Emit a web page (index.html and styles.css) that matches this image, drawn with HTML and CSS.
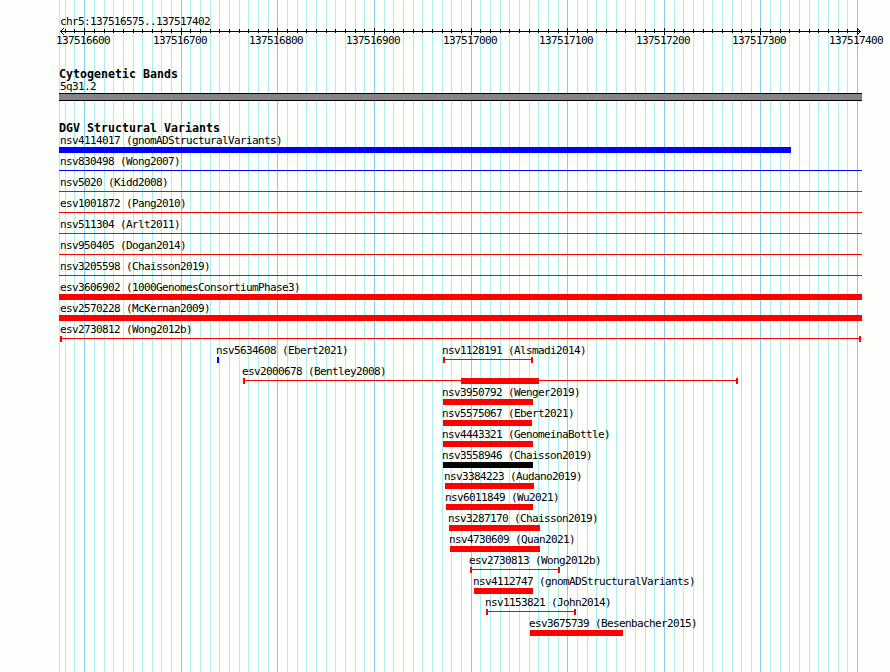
FILE: index.html
```
<!DOCTYPE html>
<html lang="en">

<head>
    <meta charset="UTF-8">
    <meta name="viewport" content="width=device-width, initial-scale=1.0">
    <title>chr5:137516575..137517402</title>
    <link rel="stylesheet" href="styles.css">
</head>

<body>
    <div class="browser">
        <svg class="grid" id="grid" width="890" height="672" shape-rendering="crispEdges"></svg>

        <div class="region">chr5:137516575..137517402</div>
        <svg class="ruler" id="ruler" width="890" height="7" shape-rendering="crispEdges"></svg>
        <div class="scale" id="scale"></div>

        <h2 class="track-title cyto-title">Cytogenetic Bands</h2>
        <div class="band-label">5q31.2</div>
        <div class="band"></div>

        <h2 class="track-title dgv-title">DGV Structural Variants</h2>
        <div id="variants"></div>
    </div>

    <script src="script.js"></script>
</body>

</html>
```
FILE: styles.css
```
body {
    margin: 0;
    background-color: #fdfffc;
    color: #000;
    font-family: "DejaVu Sans Mono", monospace;
    font-size: 11px;
    letter-spacing: -0.622px;
    line-height: 13px;
}

.browser {
    position: relative;
    width: 890px;
    height: 672px;
    overflow: hidden;
}

/* sits behind every track */
.grid {
    position: absolute;
    top: 0;
    left: 0;
    z-index: -1;
}

.minor {
    fill: #afeeee;
}

.major {
    fill: #87ceeb;
}

.region {
    padding: 15px 0 0 60px;
}

.ruler {
    display: block;
}

.scale {
    display: grid;
    height: 13px;
    margin-top: -1px;
}

.scale span {
    grid-area: 1 / 1;
    white-space: nowrap;
}

.track-title {
    margin: 0 0 0 59px;
    font-size: 11.6px;
    font-weight: bold;
    letter-spacing: 0.016px;
    line-height: 13px;
}

.cyto-title {
    margin-top: 21px;
}

.band-label {
    height: 12px;
    margin-left: 60px;
    line-height: 11px;
}

.band {
    box-sizing: border-box;
    width: 803px;
    height: 8px;
    margin-left: 59px;
    border: solid #000;
    border-width: 1px 0;
    background-color: #868286;
}

.dgv-title {
    margin-top: 21px;
    height: 12px;
}

.row {
    display: grid;
    height: 21px;
}

.feature {
    grid-area: 1 / 1;
    white-space: nowrap;
}

.name {
    height: 13px;
}

.glyph {
    display: flex;
    height: 6px;
    color: #f00;
}

.glyph.blue {
    color: #00f;
}

.glyph.black {
    color: #000;
}

.glyph.bar {
    background-color: currentColor;
}

.glyph.line,
.glyph.range {
    background: linear-gradient(currentColor, currentColor) 0 2px / 100% 1px no-repeat;
}

.glyph.range {
    box-sizing: border-box;
    border: solid currentColor;
    border-width: 0 2px;
}

.core {
    height: 6px;
    background-color: currentColor;
}
```
FILE: script.js
```
const svgNS = 'http://www.w3.org/2000/svg';

// gridlines every 10 bp, the first three are fixed by the left edge
const lines = [59, 65, 74];
for (let i = 0; i <= 80; i++) {
    lines.push(Math.round(84.2 + i * 9.6614));
}

function addRect(parent, x, y, w, h, cls) {
    const rect = document.createElementNS(svgNS, 'rect');
    rect.setAttribute('x', x);
    rect.setAttribute('y', y);
    rect.setAttribute('width', w);
    rect.setAttribute('height', h);
    if (cls) rect.setAttribute('class', cls);
    parent.appendChild(rect);
}

const grid = document.getElementById('grid');
const ruler = document.getElementById('ruler');
const scale = document.getElementById('scale');

addRect(ruler, 60, 3, 801, 1);
lines.forEach((x, i) => {
    const major = i >= 3 && (i - 3) % 10 === 0;
    addRect(grid, x, 0, 1, 672, major ? 'major' : 'minor');
    if (i === 0) return;
    addRect(ruler, x, major ? 0 : 1, 1, major ? 7 : 4);
    if (major) {
        const label = document.createElement('span');
        label.textContent = 137516600 + (i - 3) * 10;
        label.style.marginLeft = (x - 28) + 'px';
        scale.appendChild(label);
    }
});

// arrow heads
for (let i = 1; i <= 3; i++) {
    addRect(ruler, 60 + i, 3 - i, 1, 1);
    addRect(ruler, 60 + i, 3 + i, 1, 1);
    addRect(ruler, 860 - i, 3 - i, 1, 1);
    addRect(ruler, 860 - i, 3 + i, 1, 1);
}

// [name, start, end, glyph, core start, core end]
const rows = [
    [['nsv4114017 (gnomADStructuralVariants)', 59, 791, 'bar blue']],
    [['nsv830498 (Wong2007)', 59, 862, 'line blue']],
    [['nsv5020 (Kidd2008)', 59, 862, 'line']],
    [['esv1001872 (Pang2010)', 59, 862, 'line']],
    [['nsv511304 (Arlt2011)', 59, 862, 'line']],
    [['nsv950405 (Dogan2014)', 59, 862, 'line']],
    [['nsv3205598 (Chaisson2019)', 59, 862, 'line']],
    [['esv3606902 (1000GenomesConsortiumPhase3)', 59, 862, 'bar']],
    [['esv2570228 (McKernan2009)', 59, 862, 'bar']],
    [['esv2730812 (Wong2012b)', 60, 861, 'range']],
    [['nsv5634608 (Ebert2021)', 217, 219, 'bar blue'], ['nsv1128191 (Alsmadi2014)', 443, 533, 'range']],
    [['esv2000678 (Bentley2008)', 243, 738, 'range', 461, 539]],
    [['nsv3950792 (Wenger2019)', 443, 533, 'bar']],
    [['nsv5575067 (Ebert2021)', 443, 532, 'bar']],
    [['nsv4443321 (GenomeinaBottle)', 443, 533, 'bar']],
    [['nsv3558946 (Chaisson2019)', 443, 533, 'bar black']],
    [['nsv3384223 (Audano2019)', 445, 534, 'bar']],
    [['nsv6011849 (Wu2021)', 446, 533, 'bar']],
    [['nsv3287170 (Chaisson2019)', 449, 540, 'bar']],
    [['nsv4730609 (Quan2021)', 450, 540, 'bar']],
    [['esv2730813 (Wong2012b)', 470, 560, 'range']],
    [['nsv4112747 (gnomADStructuralVariants)', 474, 533, 'bar']],
    [['nsv1153821 (John2014)', 486, 576, 'range']],
    [['esv3675739 (Besenbacher2015)', 530, 623, 'bar']]
];

const variants = document.getElementById('variants');
rows.forEach(features => {
    const row = document.createElement('div');
    row.className = 'row';
    features.forEach(([name, start, end, type, coreStart, coreEnd]) => {
        const textStart = start <= 60 ? 60 : start - 1;
        const feature = document.createElement('div');
        feature.className = 'feature';
        feature.innerHTML = `
            <div class="name" style="margin-left: ${textStart}px">${name}</div>
            <div class="glyph ${type}" style="margin-left: ${start}px; width: ${end - start}px"></div>`;
        if (coreStart) {
            feature.querySelector('.glyph').innerHTML =
                `<div class="core" style="margin-left: ${coreStart - start - 2}px; width: ${coreEnd - coreStart}px"></div>`;
        }
        row.appendChild(feature);
    });
    variants.appendChild(row);
});
```
